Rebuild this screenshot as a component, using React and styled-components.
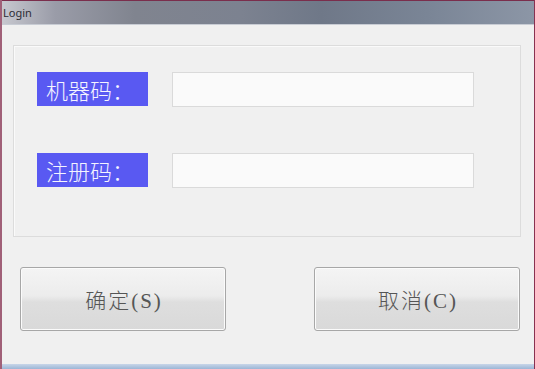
import React from "react";
import styled, { createGlobalStyle } from "styled-components";

const Global = createGlobalStyle`
  html, body { margin: 0; padding: 0; background: #f0f0f0; }
  body { width: 535px; height: 369px; overflow: hidden; }
`;

const Window = styled.div`
  width: 535px;
  height: 369px;
  box-sizing: border-box;
  background: #f0f0f0;
  border-left: 2px solid #a06078;
  border-right: 1px solid #8a3050;
  display: flex;
  flex-direction: column;
  font-family: "Noto Sans CJK SC", "Noto Sans", sans-serif;
`;

const TitleBar = styled.div`
  height: 25px;
  flex: none;
  box-sizing: border-box;
  border-top: 1px solid #7a2e4c;
  border-bottom: 1px solid #c8ccd4;
  background: linear-gradient(90deg, #c7c8cf 0%, #9a9ca8 10%, #80848f 25%, #7c8290 45%, #6f7888 60%, #7a8596 80%, #8c96a6 100%);
  display: flex;
  align-items: center;
  padding-left: 1px;
  font-family: "Noto Sans", "DejaVu Sans", sans-serif;
  font-size: 11px;
  color: #2c2c34;
`;

const Body = styled.div`
  flex: 1;
  display: flex;
  flex-direction: column;
  padding: 20px 13px 0 11px;
`;

const GroupBox = styled.div`
  height: 192px;
  box-sizing: border-box;
  border: 1px solid #dcdcdc;
  box-shadow: inset 1px 1px 0 #fafafa;
  display: flex;
  flex-direction: column;
  gap: 47px;
  padding: 26px 0 0 23px;
`;

const Row = styled.div`
  display: flex;
  align-items: center;
  gap: 24px;
  height: 34px;
`;

const Label = styled.div`
  width: 111px;
  height: 34px;
  box-sizing: border-box;
  background: #5959f2;
  color: #f4f4ff;
  font-size: 22px;
  font-weight: 300;
  line-height: 34px;
  padding-left: 9px;
  white-space: nowrap;
`;

const Input = styled.input`
  width: 302px;
  height: 35px;
  box-sizing: border-box;
  border: 1px solid #dadada;
  background: #fafafa;
  outline: none;
  margin: 0;
`;

const Buttons = styled.div`
  display: flex;
  justify-content: space-between;
  margin-top: 30px;
  padding: 0 1px 0 7px;
`;

const Button = styled.button`
  width: 206px;
  height: 64px;
  box-sizing: border-box;
  border: 1px solid #a7a7a7;
  border-radius: 3px;
  background: linear-gradient(180deg, #f4f4f4 0%, #ececec 45%, #dedede 55%, #d9d9d9 100%);
  box-shadow: inset 0 0 0 1px #fbfbfb;
  color: #555;
  font-family: "Liberation Serif", "Noto Sans CJK SC", serif;
  font-size: 21px;
  font-weight: 300;
  letter-spacing: 2px;
  padding: 0 0 0 2px;
  margin: 0;
`;

const BottomEdge = styled.div`
  height: 5px;
  flex: none;
  margin-top: auto;
  background: linear-gradient(180deg, #c8d6e8 0%, #9cb6d6 100%);
`;

export default function App() {
  return (
    <>
      <Global />
      <Window>
        <TitleBar>Login</TitleBar>
        <Body>
          <GroupBox>
            <Row>
              <Label>机器码：</Label>
              <Input />
            </Row>
            <Row>
              <Label>注册码：</Label>
              <Input />
            </Row>
          </GroupBox>
          <Buttons>
            <Button>确定(S)</Button>
            <Button>取消(C)</Button>
          </Buttons>
        </Body>
        <BottomEdge />
      </Window>
    </>
  );
}
